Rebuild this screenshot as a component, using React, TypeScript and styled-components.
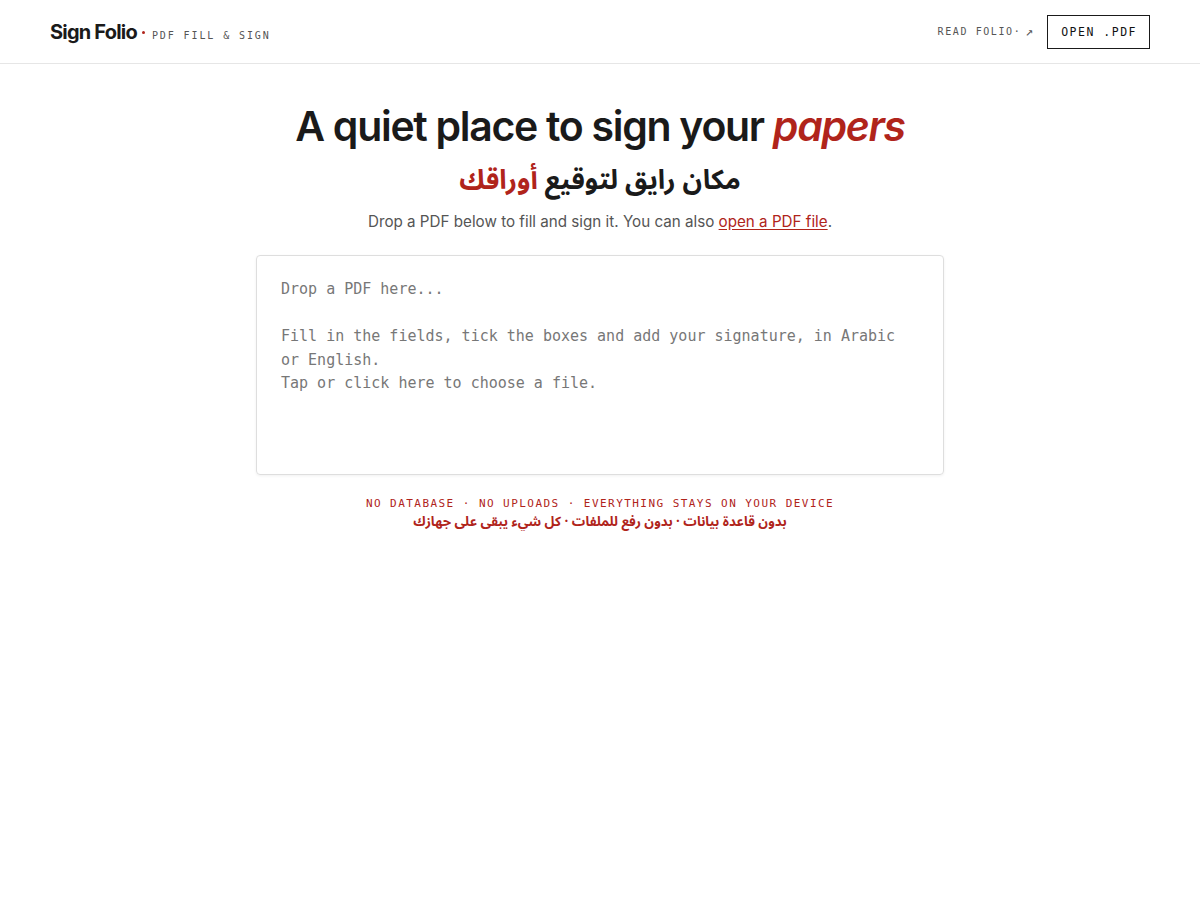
import React from "react";
import styled, { createGlobalStyle } from "styled-components";

const Global = createGlobalStyle`
  * { box-sizing: border-box; }
  html, body { margin: 0; padding: 0; background: #fff; }
  body { font-family: Inter, "Noto Sans", sans-serif; color: #1a1a1a; }
`;

const mono = `"DejaVu Sans Mono", "Liberation Mono", monospace`;
const red = "#b0241b";

const Header = styled.header`
  height: 64px;
  border-bottom: 1px solid #e6e6e6;
  display: flex;
  align-items: center;
  justify-content: space-between;
  padding: 0 50px;
`;

const Brand = styled.div`
  display: flex;
  align-items: baseline;
  gap: 7px;
`;

const Logo = styled.span`
  font-family: Inter, sans-serif;
  font-weight: 700;
  font-size: 20px;
  letter-spacing: -0.8px;
  color: #1a1a1a;
  position: relative;
  padding-right: 8px;
`;

const Dot = styled.span`
  position: absolute;
  right: 0;
  top: 11px;
  width: 3px;
  height: 3px;
  border-radius: 50%;
  background: ${red};
`;

const Tag = styled.span`
  font-family: ${mono};
  font-size: 10px;
  letter-spacing: 1.9px;
  color: #555;
`;

const Nav = styled.nav`
  display: flex;
  align-items: center;
  gap: 14px;
`;

const NavLink = styled.a`
  font-family: ${mono};
  font-size: 10px;
  letter-spacing: 1.6px;
  color: #555;
  text-decoration: none;
  display: flex;
  align-items: center;
  gap: 4px;
`;

const Arrow = styled.span`
  font-size: 13px;
  letter-spacing: 0;
  font-weight: 300;
`;

const OpenButton = styled.button`
  font-family: ${mono};
  font-size: 11.5px;
  font-weight: 400;
  letter-spacing: 1.5px;
  color: #111;
  background: #fff;
  border: 1px solid #1a1a1a;
  height: 34px;
  padding: 0 12px 0 13px;
  cursor: pointer;
`;

const Main = styled.main`
  width: 688px;
  margin: 0 auto;
  display: flex;
  flex-direction: column;
  align-items: center;
  padding-top: 36px;
`;

const Title = styled.h1`
  margin: 0;
  font-family: Inter, sans-serif;
  font-weight: 600;
  font-size: 41px;
  letter-spacing: -1.3px;
  line-height: 52px;
  color: #1a1a1a;
  white-space: nowrap;
`;

const Em = styled.em`
  color: ${red};
  font-style: italic;
`;

const ArabicTitle = styled.h2`
  margin: 9px 0 0;
  font-family: "Noto Sans Arabic", "Noto Sans", "DejaVu Sans", sans-serif;
  font-weight: 700;
  font-size: 27px;
  line-height: 40px;
  color: #1a1a1a;
`;

const Red = styled.span`
  color: ${red};
`;

const Lead = styled.p`
  margin: 9px 0 0;
  font-size: 15.2px;
  line-height: 24px;
  color: #555;
`;

const Link = styled.a`
  color: ${red};
  text-decoration: underline;
  text-underline-offset: 2px;
`;

const DropBox = styled.div`
  margin-top: 21px;
  width: 688px;
  height: 220px;
  border: 1px solid #dedede;
  border-radius: 4px;
  box-shadow: 0 1px 3px rgba(0, 0, 0, 0.06);
  padding: 22px 24px;
  font-family: ${mono};
  font-size: 15px;
  line-height: 23.5px;
  color: #777;
  white-space: pre-wrap;
  cursor: pointer;
`;

const Note = styled.div`
  margin-top: 21px;
  font-family: ${mono};
  font-size: 11px;
  letter-spacing: 1.45px;
  color: ${red};
  line-height: 16px;
`;

const ArabicNote = styled.div`
  margin-top: 1px;
  font-family: "Noto Sans Arabic", "Noto Sans", "DejaVu Sans", sans-serif;
  font-weight: 700;
  font-size: 13.3px;
  color: ${red};
  line-height: 18px;
`;

export default function App() {
  return (
    <>
      <Global />
      <Header>
        <Brand>
          <Logo>
            Sign Folio
            <Dot />
          </Logo>
          <Tag>PDF FILL &amp; SIGN</Tag>
        </Brand>
        <Nav>
          <NavLink href="#">
            READ FOLIO· <Arrow>↗</Arrow>
          </NavLink>
          <OpenButton>OPEN .PDF</OpenButton>
        </Nav>
      </Header>
      <Main>
        <Title>
          A quiet place to sign your <Em>papers</Em>
        </Title>
        <ArabicTitle dir="rtl">
          مكان رايق لتوقيع <Red>أوراقك</Red>
        </ArabicTitle>
        <Lead>
          Drop a PDF below to fill and sign it. You can also{" "}
          <Link href="#">open a PDF file</Link>.
        </Lead>
        <DropBox>
          {"Drop a PDF here...\n\nFill in the fields, tick the boxes and add your signature, in Arabic or English.\nTap or click here to choose a file."}
        </DropBox>
        <Note>NO DATABASE · NO UPLOADS · EVERYTHING STAYS ON YOUR DEVICE</Note>
        <ArabicNote dir="rtl">
          بدون قاعدة بيانات · بدون رفع للملفات · كل شيء يبقى على جهازك
        </ArabicNote>
      </Main>
    </>
  );
}
